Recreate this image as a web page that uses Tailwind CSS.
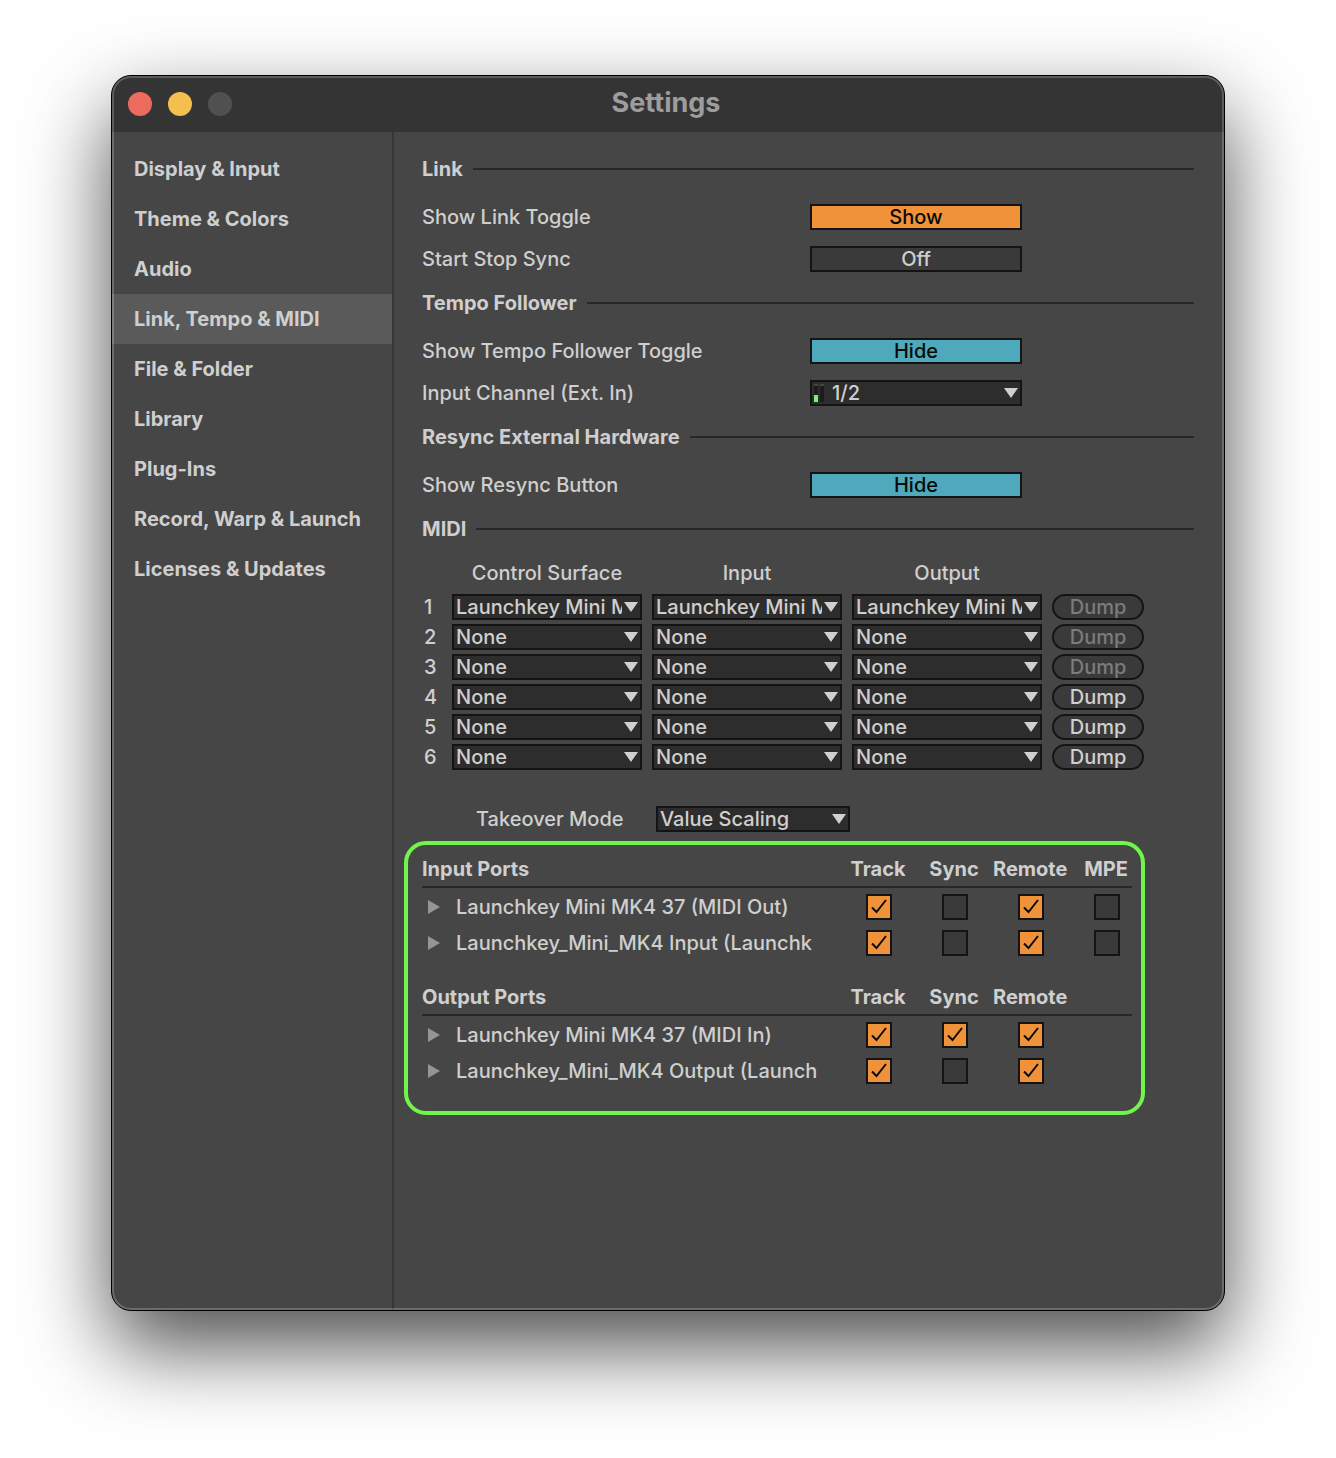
<!DOCTYPE html>
<html lang="en">
<head>
    <meta charset="UTF-8">
    <meta name="viewport" content="width=device-width, initial-scale=1.0">
    <title>Settings</title>
    <script src="https://cdn.jsdelivr.net/npm/@tailwindcss/browser@4"></script>
</head>
<body class="bg-white font-['Inter',sans-serif] text-xl/6 font-medium text-[#cfcfcf] min-h-screen flex flex-col px-[111px] pt-[75px] pb-[147px]">

    <!-- Shared icons -->
    <svg class="hidden" aria-hidden="true">
        <symbol id="arrow-down" viewBox="0 0 14 10"><path d="M0 0h14L7 10z" fill="#d0d0d0"/></symbol>
        <symbol id="arrow-right" viewBox="0 0 12 14"><path d="M0 0l12 7-12 7z" fill="#959595"/></symbol>
        <symbol id="check" viewBox="0 0 26 26"><path d="M6 13.5l4.5 4.5L20 6" fill="none" stroke="#0a0a0a" stroke-width="2"/></symbol>
    </svg>

    <!-- Settings window -->
    <div class="relative flex-1 flex flex-col rounded-[20px] border border-black bg-[#464646] overflow-hidden shadow-[0_36px_84px_rgba(0,0,0,0.7)]">

        <!-- Title Bar -->
        <header class="h-14 shrink-0 bg-[#343434] grid grid-cols-[1fr_auto_1fr] items-center pl-4 pr-5">
            <div class="flex gap-4">
                <button type="button" aria-label="Close" class="size-6 rounded-full bg-[#ed6a5e]"></button>
                <button type="button" aria-label="Minimize" class="size-6 rounded-full bg-[#f5bf4f]"></button>
                <button type="button" aria-label="Zoom" class="size-6 rounded-full bg-[#505050]" disabled></button>
            </div>
            <h1 class="pb-[2px] text-[27px]/8 font-bold text-[#9d9d9d]">Settings</h1>
        </header>

        <div class="flex-1 flex">
            <!-- Sidebar -->
            <nav class="w-[282px] shrink-0 border-r-2 border-[#363636] pt-3 font-bold flex flex-col">
                <a href="#" class="px-[22px] py-[13px]">Display &amp; Input</a>
                <a href="#" class="px-[22px] py-[13px]">Theme &amp; Colors</a>
                <a href="#" class="px-[22px] py-[13px]">Audio</a>
                <a href="#" class="px-[22px] py-[13px] bg-[#5a5a5a]" aria-current="page">Link, Tempo &amp; MIDI</a>
                <a href="#" class="px-[22px] py-[13px]">File &amp; Folder</a>
                <a href="#" class="px-[22px] py-[13px]">Library</a>
                <a href="#" class="px-[22px] py-[13px]">Plug-Ins</a>
                <a href="#" class="px-[22px] py-[13px]">Record, Warp &amp; Launch</a>
                <a href="#" class="px-[22px] py-[13px]">Licenses &amp; Updates</a>
            </nav>

            <main class="flex-1 min-w-0 pl-7 pr-[30px] pt-[25px]">
                <!-- Link -->
                <section class="mb-[19px]">
                    <h2 class="font-bold flex items-center gap-[10px] mb-[23px] after:h-[2px] after:flex-1 after:bg-[#282828]">Link</h2>
                    <div class="grid grid-cols-[388px_212px] gap-y-4 items-center">
                        <span id="link-toggle-label">Show Link Toggle</span>
                        <button type="button" aria-describedby="link-toggle-label" class="h-[26px] border-2 border-[#141414] bg-[#f0923a] text-[#0a0a0a] leading-[22px]">Show</button>
                        <span id="sync-label">Start Stop Sync</span>
                        <button type="button" aria-describedby="sync-label" class="h-[26px] border-2 border-[#141414] bg-[#3a3a3a] leading-[22px]">Off</button>
                    </div>
                </section>

                <!-- Tempo Follower -->
                <section class="mb-[19px]">
                    <h2 class="font-bold flex items-center gap-[10px] mb-[23px] after:h-[2px] after:flex-1 after:bg-[#282828]">Tempo Follower</h2>
                    <div class="grid grid-cols-[388px_212px] gap-y-4 items-center">
                        <span id="tempo-label">Show Tempo Follower Toggle</span>
                        <button type="button" aria-describedby="tempo-label" class="h-[26px] border-2 border-[#141414] bg-[#4da9bb] text-[#0a0a0a] leading-[22px]">Hide</button>
                        <label for="input-channel">Input Channel (Ext. In)</label>
                        <div class="grid items-center">
                            <select id="input-channel" class="col-start-1 row-start-1 appearance-none h-[26px] w-full border-2 border-[#141414] bg-[#2d2d2d] pl-5 pr-[18px] leading-[22px]"><option>1/2</option></select>
                            <!-- Level meter -->
                            <div class="col-start-1 row-start-1 justify-self-start ml-1 flex gap-[2px] pointer-events-none">
                                <span class="w-1 h-[18px] border-t-2 border-[#444444] bg-[#1c1c1c] flex items-end"><i class="w-1 h-[7px] bg-[#72f56f]"></i></span>
                                <span class="w-1 h-[18px] border-t-2 border-[#444444] bg-[#1c1c1c]"></span>
                            </div>
                            <svg class="col-start-1 row-start-1 justify-self-end mr-1 w-[14px] h-[10px] pointer-events-none"><use href="#arrow-down"/></svg>
                        </div>
                    </div>
                </section>

                <!-- Resync External Hardware -->
                <section class="mb-[19px]">
                    <h2 class="font-bold flex items-center gap-[10px] mb-[23px] after:h-[2px] after:flex-1 after:bg-[#282828]">Resync External Hardware</h2>
                    <div class="grid grid-cols-[388px_212px] gap-y-4 items-center">
                        <span id="resync-label">Show Resync Button</span>
                        <button type="button" aria-describedby="resync-label" class="h-[26px] border-2 border-[#141414] bg-[#4da9bb] text-[#0a0a0a] leading-[22px]">Hide</button>
                    </div>
                </section>

                <!-- MIDI -->
                <section>
                    <h2 class="font-bold flex items-center gap-[10px] mb-5 after:h-[2px] after:flex-1 after:bg-[#282828]">MIDI</h2>

                    <table class="table-fixed w-[722px]">
                        <thead>
                            <tr>
                                <th class="w-[30px]"></th>
                                <th class="w-[200px] pr-[10px] pb-[7px] font-medium">Control Surface</th>
                                <th class="w-[200px] pr-[10px] pb-[7px] font-medium">Input</th>
                                <th class="w-[200px] pr-[10px] pb-[7px] font-medium">Output</th>
                                <th class="w-[92px]"></th>
                            </tr>
                        </thead>
                        <tbody id="midi-rows"></tbody>
                    </table>

                    <div class="mt-[34px] ml-[54px] grid grid-cols-[180px_194px] items-center">
                        <label for="takeover">Takeover Mode</label>
                        <div class="grid items-center">
                            <select id="takeover" class="col-start-1 row-start-1 appearance-none h-[26px] w-full border-2 border-[#141414] bg-[#2d2d2d] pl-[2px] pr-[18px] leading-[22px]"><option>Value Scaling</option></select>
                            <svg class="col-start-1 row-start-1 justify-self-end mr-1 w-[14px] h-[10px] pointer-events-none"><use href="#arrow-down"/></svg>
                        </div>
                    </div>

                    <!-- Ports -->
                    <div class="mt-[9px] -ml-[18px] w-[741px] border-4 border-[#72f54a] rounded-[22px] pl-[14px] pb-[23px]">
                        <table class="table-fixed w-[710px]">
                            <thead class="border-b-2 border-[#282828]">
                                <tr>
                                    <th class="pt-3 pb-[5px] text-left font-bold">Input Ports</th>
                                    <th class="w-[76px] pt-3 pb-[5px] pr-[2px] font-bold">Track</th>
                                    <th class="w-[76px] pt-3 pb-[5px] pr-[2px] font-bold">Sync</th>
                                    <th class="w-[76px] pt-3 pb-[5px] pr-[2px] font-bold">Remote</th>
                                    <th class="w-[63px] pt-3 pb-[5px] pl-[11px] font-bold">MPE</th>
                                </tr>
                            </thead>
                            <tbody id="input-ports"></tbody>
                        </table>

                        <table class="table-fixed w-[710px] mt-[13px]">
                            <thead class="border-b-2 border-[#282828]">
                                <tr>
                                    <th class="pt-3 pb-[5px] text-left font-bold">Output Ports</th>
                                    <th class="w-[76px] pt-3 pb-[5px] pr-[2px] font-bold">Track</th>
                                    <th class="w-[76px] pt-3 pb-[5px] pr-[2px] font-bold">Sync</th>
                                    <th class="w-[76px] pt-3 pb-[5px] pr-[2px] font-bold">Remote</th>
                                    <th class="w-[63px]"></th>
                                </tr>
                            </thead>
                            <tbody id="output-ports"></tbody>
                        </table>
                    </div>
                </section>
            </main>
        </div>

        <!-- Light inner edge of the window -->
        <div class="absolute inset-0 rounded-[19px] border-2 border-white/20 pointer-events-none"></div>
    </div>

    <script>
        const columns = ['Control Surface', 'Input', 'Output'];

        function midiRow(n) {
            const value = n === 1 ? 'Launchkey Mini MK4 37' : 'None';
            const cells = columns.map(name => `
                <td class="pr-[10px]">
                    <div class="grid items-center">
                        <select aria-label="${name} ${n}" class="col-start-1 row-start-1 appearance-none h-[26px] w-full border-2 border-[#141414] bg-[#2d2d2d] pl-[2px] pr-[18px] leading-[22px]"><option>${value}</option></select>
                        <svg class="col-start-1 row-start-1 justify-self-end mr-1 w-[14px] h-[10px] pointer-events-none"><use href="#arrow-down"/></svg>
                    </div>
                </td>`).join('');
            return `<tr class="h-[30px]">
                <td class="pl-[2px]">${n}</td>${cells}
                <td><button type="button" ${n < 4 ? 'disabled' : ''} class="block w-full h-[26px] rounded-full border-2 border-[#141414] bg-[#3a3a3a] leading-[22px] disabled:text-[#7c7c7c]">Dump</button></td>
            </tr>`;
        }

        function portRow(port) {
            const labels = ['Track', 'Sync', 'Remote', 'MPE'];
            const boxes = port.on.map((on, i) => `
                <td class="pt-[6px] pb-1 ${i === 3 ? 'pl-[13px]' : ''}">
                    <div class="grid size-[26px] mx-auto">
                        <input type="checkbox" aria-label="${port.name} ${labels[i]}" ${on ? 'checked' : ''} class="peer col-start-1 row-start-1 appearance-none size-[26px] border-2 border-[#141414] bg-[#3a3a3a] checked:bg-[#f0923a]">
                        <svg class="hidden peer-checked:block col-start-1 row-start-1 size-[26px] pointer-events-none"><use href="#check"/></svg>
                    </div>
                </td>`).join('');
            return `<tr>
                <td class="pt-[6px] pb-1">
                    <div class="flex items-center gap-4 pl-[6px]">
                        <button type="button" aria-label="Expand ${port.name}"><svg class="block w-3 h-[14px]"><use href="#arrow-right"/></svg></button>
                        <span class="w-[362px] overflow-hidden whitespace-nowrap">${port.name}</span>
                    </div>
                </td>${boxes}
            </tr>`;
        }

        const inputs = [
            { name: 'Launchkey Mini MK4 37 (MIDI Out)', on: [true, false, true, false] },
            { name: 'Launchkey_Mini_MK4 Input (Launchk', on: [true, false, true, false] },
        ];
        const outputs = [
            { name: 'Launchkey Mini MK4 37 (MIDI In)', on: [true, true, true] },
            { name: 'Launchkey_Mini_MK4 Output (Launch', on: [true, false, true] },
        ];

        document.getElementById('midi-rows').innerHTML = [1, 2, 3, 4, 5, 6].map(midiRow).join('');
        document.getElementById('input-ports').innerHTML = inputs.map(portRow).join('');
        document.getElementById('output-ports').innerHTML = outputs.map(portRow).join('');
    </script>
</body>
</html>
